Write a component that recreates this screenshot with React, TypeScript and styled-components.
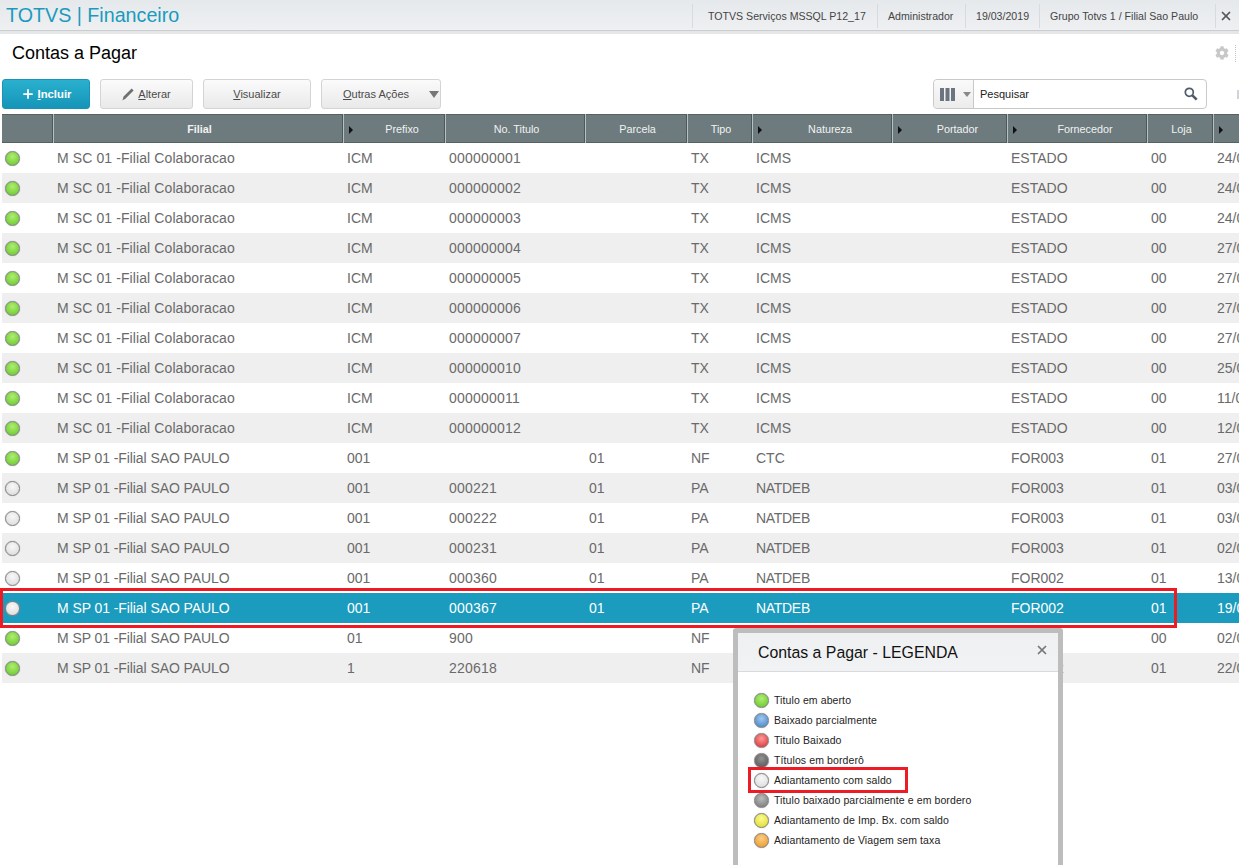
import React from 'react'
import styled, { createGlobalStyle } from 'styled-components'
import { Plus, X } from 'lucide-react'
import { FaCog } from 'react-icons/fa'

const Global = createGlobalStyle`
  html, body {
    margin: 0;
    padding: 0;
    background: #fff;
    overflow: hidden;
  }
  body {
    font-family: "Liberation Sans", Arial, sans-serif;
  }
`

const Page = styled.div`
  position: relative;
  width: 1239px;
  height: 865px;
  overflow: hidden;
`

const TopBar = styled.header`
  display: flex;
  align-items: center;
  height: 31px;
  padding-left: 6px;
  background: linear-gradient(#e6e9ec, #eef0f2);
  border-bottom: 3px solid #e4e6e8;
  box-shadow: inset 0 -1px 0 #c9cdd1;
`

const Brand = styled.div`
  flex: 1;
  font-size: 19.7px;
  color: #1a9bbd;
`

const BarItem = styled.div<{ $w: number; $pad?: number }>`
  display: flex;
  align-items: center;
  box-sizing: border-box;
  width: ${p => p.$w}px;
  height: 24px;
  padding-left: ${p => p.$pad ?? 10}px;
  border-left: 1px solid #d8dbde;
  font-size: 10.6px;
  color: #444;
  white-space: nowrap;
`

const CloseItem = styled(BarItem)`
  padding: 0 3px 0 0;
  justify-content: center;
  color: #555;
`

const TitleRow = styled.div`
  display: flex;
  align-items: center;
  justify-content: space-between;
  height: 38px;
  padding: 0 3px 0 12px;
`

const Title = styled.h1`
  margin: 0;
  font-size: 18px;
  font-weight: 400;
  color: #000;
`

const GearBox = styled.div`
  display: flex;
  align-items: center;
  height: 17px;
  padding-right: 6px;
  color: #c8c8c8;
  border-right: 1px dotted #c4c4c4;
`

const Toolbar = styled.div`
  display: flex;
  align-items: center;
  height: 30px;
  margin-top: 7px;
  padding-left: 2px;
`

const Btn = styled.button<{ $w: number }>`
  display: flex;
  align-items: center;
  justify-content: center;
  gap: 4px;
  width: ${p => p.$w}px;
  height: 30px;
  margin-right: 10px;
  padding: 0;
  border: 1px solid #d4d4d4;
  border-radius: 3px;
  background: linear-gradient(#fbfbfb, #e9e9e9);
  font: 11px "Liberation Sans", Arial, sans-serif;
  color: #4a4a4a;
  u {
    text-decoration: underline;
  }
`

const PrimaryBtn = styled(Btn)`
  gap: 3px;
  border: 1px solid #1c93b6;
  background: linear-gradient(#2ab0cf, #1595b8);
  color: #fff;
  font-size: 11.3px;
  font-weight: 700;
`

const MoreBtn = styled(Btn)`
  position: relative;
  padding-right: 10px;
`

const Caret = styled.span`
  position: absolute;
  right: 1px;
  top: 11px;
  width: 0;
  height: 0;
  border-left: 5px solid transparent;
  border-right: 5px solid transparent;
  border-top: 7px solid #777;
`

const Spacer = styled.div`
  flex: 1;
`

const SearchBox = styled.div`
  display: flex;
  width: 274px;
  height: 30px;
  margin-right: 30px;
  box-sizing: border-box;
  border: 1px solid #c9c9c9;
  border-radius: 4px;
  background: #fff;
`

const ColumnPick = styled.div`
  display: flex;
  align-items: center;
  gap: 8px;
  width: 40px;
  box-sizing: border-box;
  padding-left: 6px;
  background: linear-gradient(#fafafa, #ececec);
  border-right: 1px solid #c9c9c9;
  border-radius: 4px 0 0 4px;
`

const SmallCaret = styled.span`
  width: 0;
  height: 0;
  border-left: 4px solid transparent;
  border-right: 4px solid transparent;
  border-top: 5px solid #888;
`

const SearchText = styled.div`
  flex: 1;
  display: flex;
  align-items: center;
  justify-content: space-between;
  padding: 0 8px 0 6px;
  font-size: 11px;
  color: #222;
`

const EdgeStub = styled.span`
  width: 2px;
  height: 9px;
  background: #d4d0dc;
`

const GridWrap = styled.div`
  width: 1300px;
  margin-top: 5px;
  padding-left: 2px;
`

const cols = '51px 290px 102px 140px 102px 65px 140px 115px 140px 66px 90px'

const HeadRow = styled.div`
  display: grid;
  grid-template-columns: ${cols};
  height: 29px;
  background: #6d7b7e;
  box-shadow: inset 0 1px 0 #56625f, inset 0 -1px 0 #56625f;
`

const HeadCell = styled.div<{ $arrow?: boolean }>`
  position: relative;
  display: flex;
  align-items: center;
  justify-content: center;
  box-sizing: border-box;
  padding-left: ${p => (p.$arrow ? 15 : 2)}px;
  border-left: 1px solid #b9c0c1;
  box-shadow: -1px 0 0 #4d585a;
  font-size: 10.8px;
  color: #f2f2f2;
  &:first-child {
    border-left: 0;
    box-shadow: none;
  }
  ${p =>
    p.$arrow &&
    `&::before {
      content: '';
      position: absolute;
      left: 5px;
      top: 12px;
      border-left: 4px solid #111;
      border-top: 4px solid transparent;
      border-bottom: 4px solid transparent;
    }`}
`

const Row = styled.div<{ $alt?: boolean; $sel?: boolean }>`
  display: grid;
  grid-template-columns: ${cols};
  align-items: center;
  height: 30px;
  font-size: 14px;
  color: ${p => (p.$sel ? '#fff' : '#6a6a6a')};
  background: ${p => (p.$sel ? '#1b9bbd' : p.$alt ? '#efefef' : '#fff')};
`

const Cell = styled.div<{ $track?: number }>`
  padding-left: 4px;
  letter-spacing: ${p => p.$track ?? 0}px;
  white-space: nowrap;
  overflow: hidden;
`

const DotCell = styled.div`
  display: flex;
  padding-left: 3px;
`

const palette: Record<string, [string, string]> = {
  green: ['#aeee70', '#62c526'],
  blue: ['#a0c8ee', '#3a7fc6'],
  red: ['#fb9a9a', '#de2a2a'],
  dark: ['#939393', '#505050'],
  white: ['#f8f8f8', '#d8d8d8'],
  gray: ['#bcbcbc', '#727272'],
  yellow: ['#fbfa96', '#dfd91a'],
  orange: ['#fbcd85', '#ea951c'],
}

const Dot = styled.span<{ $color: string }>`
  display: block;
  flex: none;
  box-sizing: border-box;
  width: 15px;
  height: 15px;
  border-radius: 50%;
  border: 1px solid #808080;
  box-shadow: 0 0 1px #999;
  background: radial-gradient(
    circle at 50% 35%,
    ${p => palette[p.$color][0]},
    ${p => palette[p.$color][1]}
  );
`

const Highlight = styled.div`
  position: absolute;
  left: 0;
  top: 588px;
  width: 1177px;
  height: 40px;
  box-sizing: border-box;
  border: 3px solid #ed1c24;
  pointer-events: none;
`

const Dialog = styled.aside`
  position: absolute;
  left: 733px;
  top: 628px;
  width: 330px;
  height: 260px;
  box-sizing: border-box;
  border: 5px solid #bdbdbd;
  border-radius: 3px;
  background: #fff;
`

const DialogHead = styled.div`
  display: flex;
  align-items: center;
  justify-content: space-between;
  height: 39px;
  padding: 1px 9px 0 20px;
  box-sizing: border-box;
  background: linear-gradient(#eff0f2, #f1f2f4);
  border-bottom: 1px solid #d8dadd;
  font-size: 15.85px;
  color: #111;
`

const DialogClose = styled.span`
  display: flex;
  margin-top: -6px;
  color: #777;
`

const LegendList = styled.ul`
  list-style: none;
  margin: 0;
  padding: 18px 0 0 16px;
`

const LegendItem = styled.li`
  display: flex;
  align-items: center;
  gap: 5px;
  height: 20px;
  font-size: 10.5px;
  letter-spacing: 0.1px;
  color: #222;
`

const LegendMark = styled.div`
  position: absolute;
  left: 748px;
  top: 767px;
  width: 160px;
  height: 26px;
  box-sizing: border-box;
  border: 3px solid #ed1c24;
`

type R = {
  dot: string
  fil: string
  pre: string
  tit: string
  par: string
  tip: string
  nat: string
  forn: string
  loja: string
  dt: string
}

const sc = (tit: string, dt: string): R => ({
  dot: 'green',
  fil: 'M SC 01 -Filial Colaboracao',
  pre: 'ICM',
  tit,
  par: '',
  tip: 'TX',
  nat: 'ICMS',
  forn: 'ESTADO',
  loja: '00',
  dt,
})

const sp = (dot: string, pre: string, tit: string, par: string, tip: string, nat: string, forn: string, loja: string, dt: string): R => ({
  dot,
  fil: 'M SP 01 -Filial SAO PAULO',
  pre,
  tit,
  par,
  tip,
  nat,
  forn,
  loja,
  dt,
})

const rows: R[] = [
  sc('000000001', '24/0'),
  sc('000000002', '24/0'),
  sc('000000003', '24/0'),
  sc('000000004', '27/0'),
  sc('000000005', '27/0'),
  sc('000000006', '27/0'),
  sc('000000007', '27/0'),
  sc('000000010', '25/0'),
  sc('000000011', '11/0'),
  sc('000000012', '12/0'),
  sp('green', '001', '', '01', 'NF', 'CTC', 'FOR003', '01', '27/0'),
  sp('white', '001', '000221', '01', 'PA', 'NATDEB', 'FOR003', '01', '03/0'),
  sp('white', '001', '000222', '01', 'PA', 'NATDEB', 'FOR003', '01', '03/0'),
  sp('white', '001', '000231', '01', 'PA', 'NATDEB', 'FOR003', '01', '02/0'),
  sp('white', '001', '000360', '01', 'PA', 'NATDEB', 'FOR002', '01', '13/0'),
  sp('white', '001', '000367', '01', 'PA', 'NATDEB', 'FOR002', '01', '19/0'),
  sp('green', '01', '900', '', 'NF', '', '', '00', '02/0'),
  sp('green', '1', '220618', '', 'NF', '', 'FOR002', '01', '22/0'),
]

const heads: [string, boolean][] = [
  ['', false],
  ['Filial', false],
  ['Prefixo', true],
  ['No. Titulo', false],
  ['Parcela', false],
  ['Tipo', false],
  ['Natureza', true],
  ['Portador', true],
  ['Fornecedor', true],
  ['Loja', false],
  ['', true],
]

const legend: [string, string][] = [
  ['green', 'Titulo em aberto'],
  ['blue', 'Baixado parcialmente'],
  ['red', 'Titulo Baixado'],
  ['dark', 'Títulos em borderô'],
  ['white', 'Adiantamento com saldo'],
  ['gray', 'Titulo baixado parcialmente e em bordero'],
  ['yellow', 'Adiantamento de Imp. Bx. com saldo'],
  ['orange', 'Adiantamento de Viagem sem taxa'],
]

export default function App() {
  return (
    <Page>
      <Global />
      <TopBar>
        <Brand>TOTVS | Financeiro</Brand>
        <BarItem $w={185} $pad={15}>TOTVS Serviços MSSQL P12_17</BarItem>
        <BarItem $w={88}>Administrador</BarItem>
        <BarItem $w={74}>19/03/2019</BarItem>
        <BarItem $w={176}>Grupo Totvs 1 / Filial Sao Paulo</BarItem>
        <CloseItem $w={24}>
          <X size={14} strokeWidth={3} />
        </CloseItem>
      </TopBar>
      <TitleRow>
        <Title>Contas a Pagar</Title>
        <GearBox>
          <FaCog size={14} />
        </GearBox>
      </TitleRow>
      <Toolbar>
        <PrimaryBtn $w={88}>
          <Plus size={14} strokeWidth={3} />
          <span>
            <u>I</u>ncluir
          </span>
        </PrimaryBtn>
        <Btn $w={93}>
          <svg width="12" height="13" viewBox="0 0 12 13" fill="#707070">
            <path d="M9.6 0.4 L11.6 2.4 L3.6 10.6 L0.4 12.6 L1.6 8.6 Z" />
          </svg>
          <span>
            <u>A</u>lterar
          </span>
        </Btn>
        <Btn $w={108}>
          <span>
            <u>V</u>isualizar
          </span>
        </Btn>
        <MoreBtn $w={120}>
          <span>
            <u>O</u>utras Ações
          </span>
          <Caret />
        </MoreBtn>
        <Spacer />
        <SearchBox>
          <ColumnPick>
            <svg width="15" height="13" viewBox="0 0 15 13" fill="#6c7480">
              <rect x="0" y="0" width="4" height="13" />
              <rect x="5.5" y="0" width="4" height="13" />
              <rect x="11" y="0" width="4" height="13" />
            </svg>
            <SmallCaret />
          </ColumnPick>
          <SearchText>
            Pesquisar
            <svg width="14" height="14" viewBox="0 0 14 14" fill="none" stroke="#4f5a6a">
              <circle cx="5.3" cy="5.3" r="4" strokeWidth="1.7" />
              <path d="M8.4 8.4 L12.7 12.7" strokeWidth="2.6" />
            </svg>
          </SearchText>
        </SearchBox>
        <EdgeStub />
      </Toolbar>
      <GridWrap>
        <HeadRow>
          {heads.map(([label, arrow], i) => (
            <HeadCell key={i} $arrow={arrow}>
              {label === 'Filial' ? <b>{label}</b> : label}
            </HeadCell>
          ))}
        </HeadRow>
        {rows.map((r, i) => (
          <Row key={i} $alt={i % 2 === 1} $sel={i === 15}>
            <DotCell>
              <Dot $color={r.dot} />
            </DotCell>
            <Cell $track={i < 10 ? 0.1 : -0.08}>{r.fil}</Cell>
            <Cell>{r.pre}</Cell>
            <Cell $track={0.22}>{r.tit}</Cell>
            <Cell>{r.par}</Cell>
            <Cell>{r.tip}</Cell>
            <Cell $track={r.nat === 'NATDEB' ? -0.3 : 0}>{r.nat}</Cell>
            <Cell />
            <Cell>{r.forn}</Cell>
            <Cell>{r.loja}</Cell>
            <Cell>{r.dt}</Cell>
          </Row>
        ))}
      </GridWrap>
      <Highlight />
      <Dialog>
        <DialogHead>
          Contas a Pagar - LEGENDA
          <DialogClose>
            <X size={14} strokeWidth={3} />
          </DialogClose>
        </DialogHead>
        <LegendList>
          {legend.map(([c, label]) => (
            <LegendItem key={label}>
              <Dot $color={c} />
              {label}
            </LegendItem>
          ))}
        </LegendList>
      </Dialog>
      <LegendMark />
    </Page>
  )
}
